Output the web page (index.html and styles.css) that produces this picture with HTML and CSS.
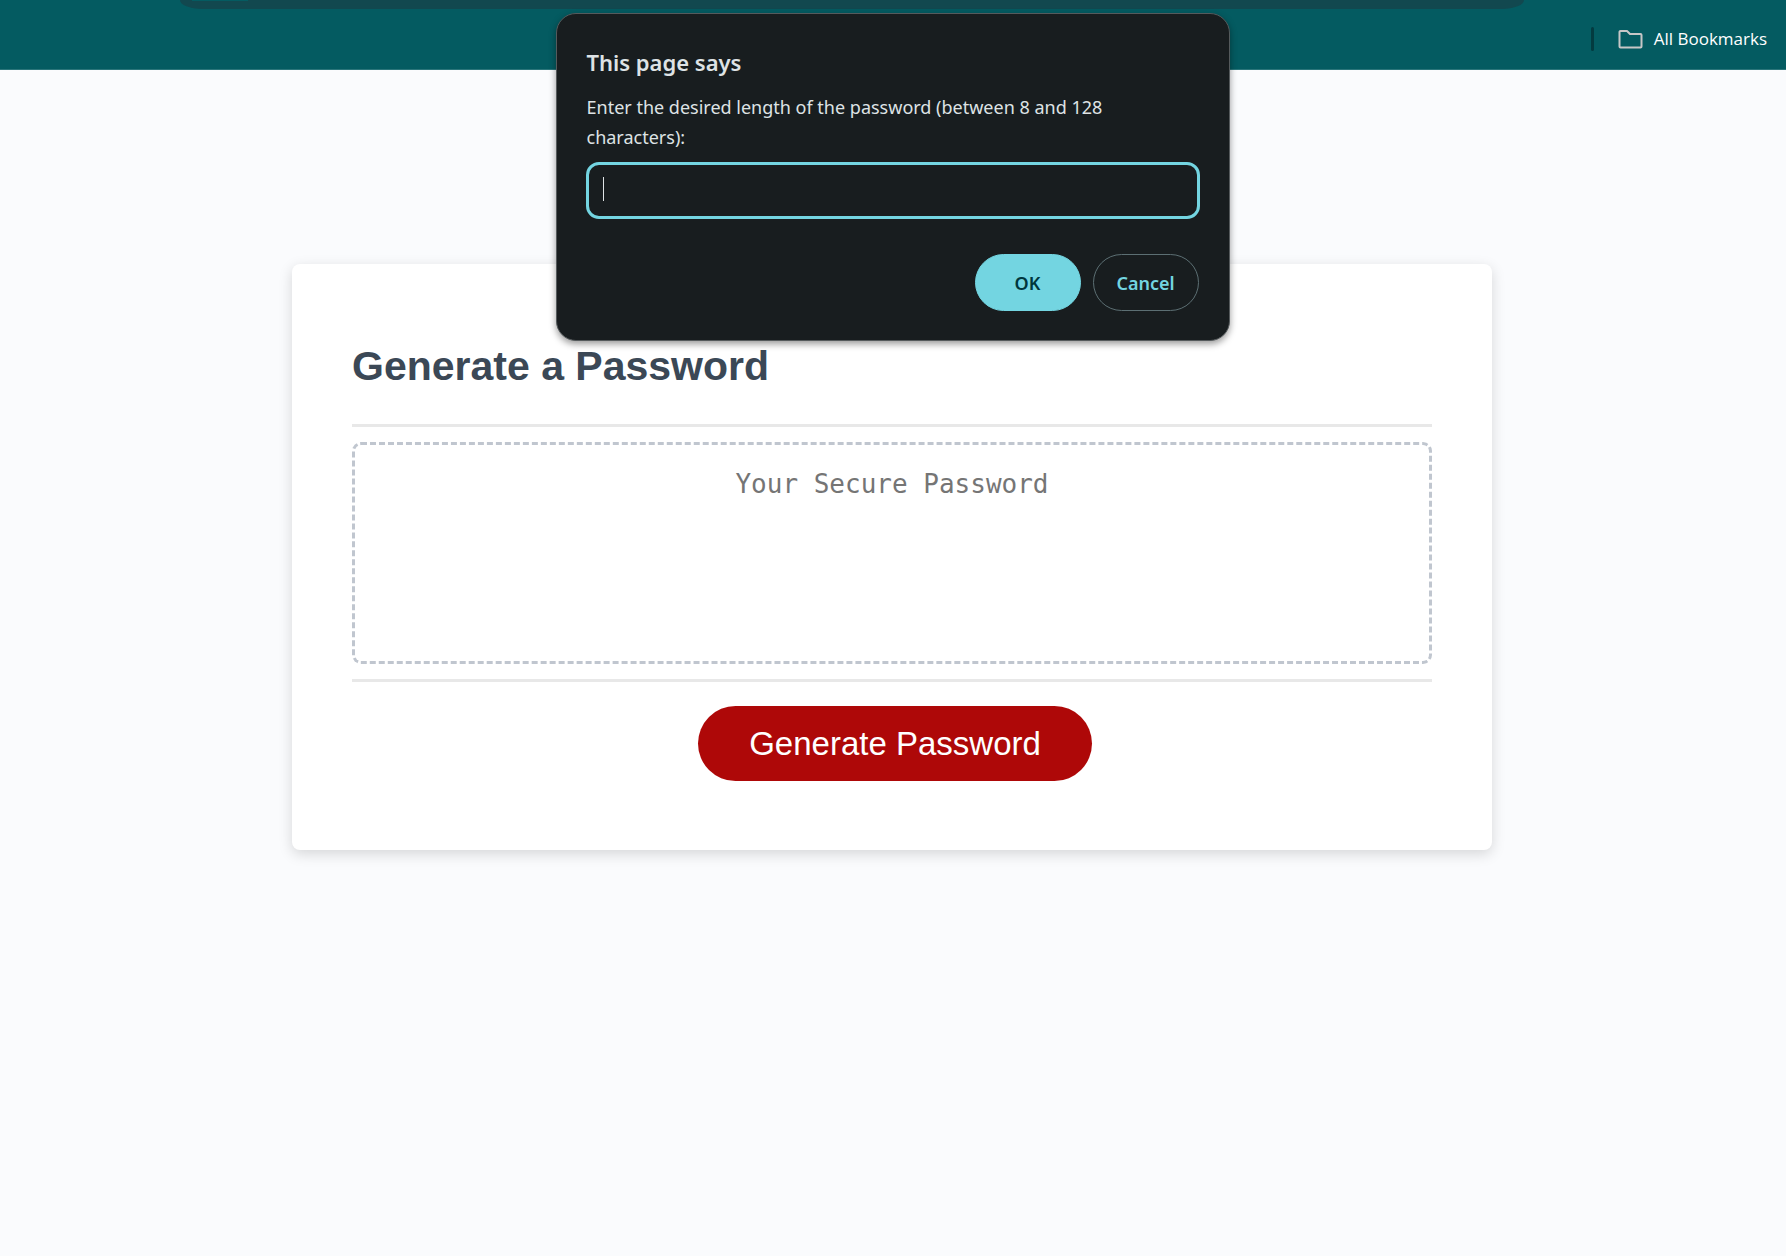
FILE: index.html
```html
<!DOCTYPE html>
<html lang="en">
<head>
<meta charset="utf-8">
<title>Password Generator</title>
<link rel="stylesheet" href="styles.css">
</head>
<body>
<header class="browser-bar">
  <div class="omnibox"><span class="site-chip"></span></div>
  <nav class="bookmarks">
    <span class="separator"></span>
    <button class="all-bookmarks" type="button">
      <svg class="folder" viewBox="0 0 25 20" aria-hidden="true"><path d="M2.500 2h6.500l3 3h10.500a1 1 0 0 1 1 1v11.500a1 1 0 0 1-1 1h-20a1 1 0 0 1-1-1V3a1 1 0 0 1 1-1z"/></svg>
      <span>All Bookmarks</span>
    </button>
  </nav>
</header>

<main class="page">
  <section class="card">
    <h2 class="card-title">Generate a Password</h2>
    <div class="card-body">
      <textarea class="password" readonly placeholder="Your Secure Password" aria-label="Your Secure Password"></textarea>
    </div>
    <div class="card-footer">
      <button class="generate" type="button">Generate Password</button>
    </div>
  </section>
</main>

<dialog class="prompt" open aria-labelledby="prompt-title">
  <form class="prompt-form" method="dialog">
    <h1 class="prompt-title" id="prompt-title">This page says</h1>
    <label class="prompt-message" for="length">Enter the desired length of the password (between 8 and 128 characters):</label>
    <div class="prompt-field">
      <input class="prompt-input" id="length" type="text" autocomplete="off">
      <span class="caret"></span>
    </div>
    <div class="prompt-actions">
      <button class="prompt-button primary" type="submit">OK</button>
      <button class="prompt-button" type="submit">Cancel</button>
    </div>
  </form>
</dialog>
</body>
</html>
```
FILE: styles.css
```css
*, *::before, *::after {
  box-sizing: border-box;
}

body {
  margin: 0;
  min-height: 100vh;
  background: #fafbfd;
  font-family: "Liberation Sans", Arial, sans-serif;
}

/* Browser toolbar */
.browser-bar {
  display: flex;
  flex-direction: column;
  height: 70px;
  background: #045b61;
  border-bottom: 1px solid #2a757a;
}

.omnibox {
  height: 9px;
  margin: 0 262px 0 180px;
  padding-left: 12px;
  background: #12484f;
  border-radius: 0 0 22px 22px / 0 0 9px 9px;
}

.site-chip {
  display: block;
  width: 56px;
  height: 1px;
  background: #045b61;
}

.bookmarks {
  display: flex;
  align-items: center;
  justify-content: flex-end;
  height: 60px;
  padding-right: 19px;
}

.separator {
  width: 3px;
  height: 24px;
  margin-right: 24px;
  border-radius: 2px;
  background: #033b40;
}

.all-bookmarks {
  display: flex;
  align-items: center;
  gap: 11px;
  padding: 0;
  border: 0;
  background: none;
  color: #fff;
  font: 17px/24px "Open Sans", "Segoe UI", sans-serif;
}

.folder {
  width: 25px;
  height: 20px;
  fill: none;
  stroke: #c7c7c7;
  stroke-width: 2;
  stroke-linejoin: round;
}

/* Password generator */
.page {
  padding: 194px 2px 40px 0;
}

.card {
  width: calc(100% - 64px);
  max-width: 1200px;
  margin: 0 auto;
  padding: 78px 60px 69px;
  background: #fff;
  border-radius: 8px;
  box-shadow: 0 4px 14px rgba(0, 0, 0, 0.15);
}

.card-title {
  margin: 0;
  padding-bottom: 34px;
  color: #3b4856;
  font-size: 41px;
  line-height: 48px;
}

.card-body {
  display: flex;
  padding: 15px 0;
  border-top: 3px solid #e8e8e8;
  border-bottom: 3px solid #e8e8e8;
}

.password {
  width: 100%;
  height: 222px;
  padding: 24px 30px;
  border: 3px dashed #c0c6cf;
  border-radius: 9px;
  background: transparent;
  font: 26px/30px "DejaVu Sans Mono", Consolas, monospace;
  text-align: center;
  resize: none;
}

.password::placeholder {
  color: #757575;
}

.card-footer {
  display: flex;
  justify-content: center;
  padding: 24px 0 0 6px;
}

.generate {
  height: 75px;
  padding: 0 51px;
  border: 0;
  border-radius: 38px;
  background: #ae0808;
  color: #fff;
  font: 33px/40px "Liberation Sans", Arial, sans-serif;
}

/* Prompt dialog over the page */
.prompt {
  position: absolute;
  top: 13px;
  left: 0;
  right: 1px;
  width: 674px;
  max-width: 100%;
  margin: 0 auto;
  padding: 0;
  border: 1px solid #555a5c;
  border-radius: 20px;
  background: #181d1f;
  color: #dee3e5;
  box-shadow: 0 3px 7px rgba(0, 0, 0, 0.4);
}

.prompt-form {
  display: flex;
  flex-direction: column;
  padding: 32px 29px 29px;
  font-family: "Noto Sans", "Segoe UI", sans-serif;
}

.prompt-title {
  margin: 0 1px 14px;
  font-size: 22px;
  font-weight: 600;
  line-height: 32px;
}

.prompt-message {
  margin: 0 1px;
  font-size: 18px;
  line-height: 30px;
}

.prompt-field {
  position: relative;
  display: flex;
  margin-top: 10px;
}

.prompt-input {
  width: 100%;
  height: 57px;
  padding: 0 14px;
  border: 3px solid #73d5e1;
  border-radius: 13px;
  outline: 0;
  background: transparent;
  color: #dee3e5;
  font: 18px/30px "Noto Sans", "Segoe UI", sans-serif;
}

.caret {
  position: absolute;
  top: 15px;
  left: 17px;
  width: 1px;
  height: 24px;
  background: #dee3e5;
}

.prompt-actions {
  display: flex;
  justify-content: flex-end;
  gap: 12px;
  padding: 35px 1px 0 0;
}

.prompt-button {
  width: 106px;
  height: 57px;
  padding: 0;
  border: 1px solid #5c6f73;
  border-radius: 29px;
  background: transparent;
  color: #73d5e1;
  font: 600 18px/28px "Noto Sans", "Segoe UI", sans-serif;
}

.prompt-button.primary {
  border-color: #73d5e1;
  background: #73d5e1;
  color: #00363d;
}
```
